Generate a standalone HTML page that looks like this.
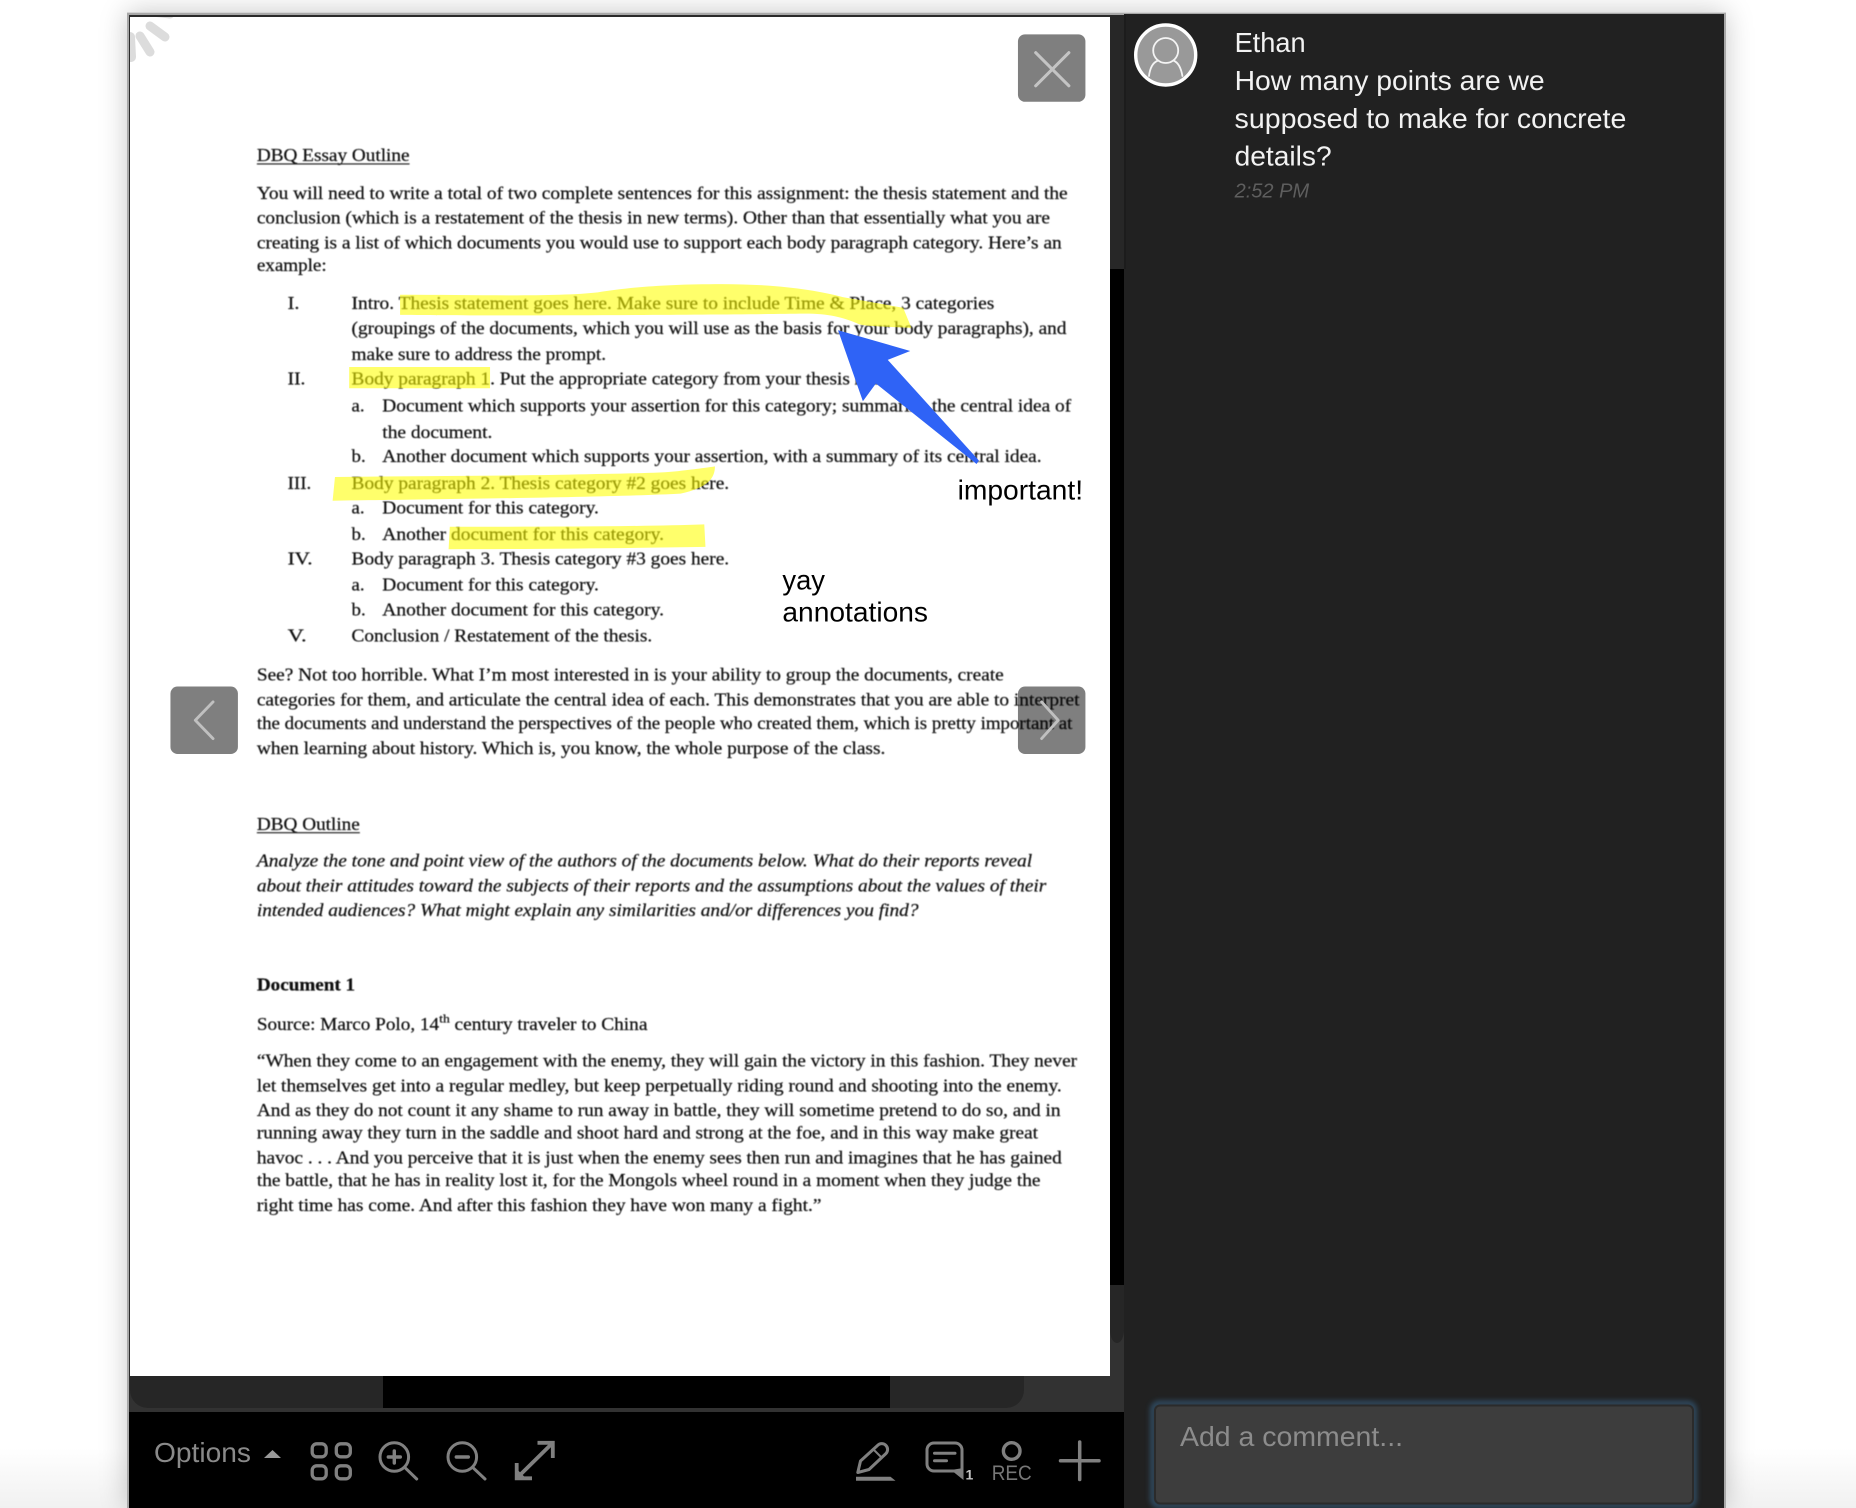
<!DOCTYPE html>
<html lang="en"><head><meta charset="utf-8"><title>Document viewer</title>
<style>
html,body{margin:0;padding:0;width:1856px;height:1508px;overflow:hidden;background:#fff}
#wrap{position:relative;width:1856px;height:1508px;overflow:hidden;background:#fff}
#fade{position:absolute;left:0;right:0;bottom:0;height:60px;background:linear-gradient(#fff,#f1f1f1)}
#shadow{position:absolute;left:127px;top:12px;width:1599px;height:1496px;box-shadow:0 0 26px rgba(0,0,0,.22)}
svg{position:absolute;left:0;top:0;display:block}
.s{font-family:"Liberation Serif",serif;font-size:15.2px;fill:#0c0c0c;stroke:#0c0c0c;stroke-width:.18px}
</style></head><body>
<div id="wrap">
<div id="fade"></div><div id="shadow"></div>
<svg width="1856" height="1508" viewBox="0 0 1856 1508" xmlns="http://www.w3.org/2000/svg">
<defs>
<filter id="soft" x="-2%" y="-2%" width="104%" height="104%"><feGaussianBlur stdDeviation="0.4"/></filter>
<filter id="glow" x="-5%" y="-20%" width="110%" height="140%"><feGaussianBlur stdDeviation="3"/></filter>
<clipPath id="page"><rect x="130" y="17" width="980" height="1359"/></clipPath>
</defs>
<!-- frame -->
<rect x="127" y="12.5" width="1599" height="1496" fill="#a8a8a8"/>
<rect x="129" y="15" width="995" height="1493" fill="#2a2a2a"/>
<rect x="130" y="17" width="980" height="1359" fill="#fff"/>
<!-- vertical scrollbar -->
<rect x="1110" y="15" width="14" height="1361" fill="#272727"/>
<rect x="1110" y="269" width="16" height="1016" fill="#000"/>
<path d="M1110 1285H1124V1330a7 13 0 0 1-14 0Z" fill="#262626"/>
<path d="M1110 1330a7 13 0 0 0 14 0V1376H1110Z" fill="#323232"/>
<!-- horizontal scrollbar -->
<rect x="130" y="1376" width="994" height="36" fill="#323232"/>
<path d="M130 1376H1024V1390a18 18 0 0 1-18 18H148a18 18 0 0 1-18-18Z" fill="#262626"/>
<rect x="383" y="1376" width="507" height="32" fill="#000"/>
<!-- toolbar -->
<rect x="129" y="1412" width="995" height="96" fill="#000"/>
<!-- right panel -->
<rect x="1124" y="14" width="600" height="1494" fill="#212121"/>
<rect x="1124" y="15" width="2" height="254" fill="#1c1c1c"/>

<!-- spinner -->
<g clip-path="url(#page)" stroke="#dcdcdc" stroke-linecap="round" fill="none">
<path d="M150 26L165 37" stroke-width="9"/><path d="M140 36L150 52" stroke-width="9"/><path d="M152 12L170 14" stroke-width="9"/><path d="M130 37L131 57" stroke-width="10"/>
</g>

<g transform="scale(1.18367)">
<!-- document text -->
<g filter="url(#soft)" clip-path="none">
<text class="s" x="217" y="136" textLength="129" lengthAdjust="spacingAndGlyphs">DBQ Essay Outline</text>
<rect x="217" y="138" width="129" height="1" fill="#222"/>
<text class="s" x="217" y="168" textLength="685" lengthAdjust="spacingAndGlyphs">You will need to write a total of two complete sentences for this assignment: the thesis statement and the</text>
<text class="s" x="217" y="189" textLength="670" lengthAdjust="spacingAndGlyphs">conclusion (which is a restatement of the thesis in new terms). Other than that essentially what you are</text>
<text class="s" x="217" y="210" textLength="680" lengthAdjust="spacingAndGlyphs">creating is a list of which documents you would use to support each body paragraph category. Here’s an</text>
<text class="s" x="217" y="229" textLength="59" lengthAdjust="spacingAndGlyphs">example:</text>

<text class="s" x="243" y="261" textLength="10" lengthAdjust="spacingAndGlyphs">I.</text>
<text class="s" x="297" y="261" textLength="543" lengthAdjust="spacingAndGlyphs">Intro. Thesis statement goes here. Make sure to include Time &amp; Place, 3 categories</text>
<text class="s" x="297" y="282" textLength="604" lengthAdjust="spacingAndGlyphs">(groupings of the documents, which you will use as the basis for your body paragraphs), and</text>
<text class="s" x="297" y="304" textLength="215" lengthAdjust="spacingAndGlyphs">make sure to address the prompt.</text>
<text class="s" x="243" y="325" textLength="15" lengthAdjust="spacingAndGlyphs">II.</text>
<text class="s" x="297" y="325" textLength="421" lengthAdjust="spacingAndGlyphs">Body paragraph 1. Put the appropriate category from your thesis</text>
<text class="s" x="722" y="325" textLength="24" lengthAdjust="spacingAndGlyphs">here.</text>
<text class="s" x="297" y="347.500" textLength="11" lengthAdjust="spacingAndGlyphs">a.</text>
<text class="s" x="323" y="347.500" textLength="582" lengthAdjust="spacingAndGlyphs">Document which supports your assertion for this category; summarize the central idea of</text>
<text class="s" x="323" y="370" textLength="93" lengthAdjust="spacingAndGlyphs">the document.</text>
<text class="s" x="297" y="390.500" textLength="12" lengthAdjust="spacingAndGlyphs">b.</text>
<text class="s" x="323" y="390.500" textLength="557" lengthAdjust="spacingAndGlyphs">Another document which supports your assertion, with a summary of its central idea.</text>
<text class="s" x="243" y="413" textLength="20" lengthAdjust="spacingAndGlyphs">III.</text>
<text class="s" x="297" y="413" textLength="319" lengthAdjust="spacingAndGlyphs">Body paragraph 2. Thesis category #2 goes here.</text>
<text class="s" x="297" y="434" textLength="11" lengthAdjust="spacingAndGlyphs">a.</text>
<text class="s" x="323" y="434" textLength="183" lengthAdjust="spacingAndGlyphs">Document for this category.</text>
<text class="s" x="297" y="456" textLength="12" lengthAdjust="spacingAndGlyphs">b.</text>
<text class="s" x="323" y="456" textLength="238" lengthAdjust="spacingAndGlyphs">Another document for this category.</text>
<text class="s" x="243" y="477" textLength="21" lengthAdjust="spacingAndGlyphs">IV.</text>
<text class="s" x="297" y="477" textLength="319" lengthAdjust="spacingAndGlyphs">Body paragraph 3. Thesis category #3 goes here.</text>
<text class="s" x="297" y="499" textLength="11" lengthAdjust="spacingAndGlyphs">a.</text>
<text class="s" x="323" y="499" textLength="183" lengthAdjust="spacingAndGlyphs">Document for this category.</text>
<text class="s" x="297" y="520" textLength="12" lengthAdjust="spacingAndGlyphs">b.</text>
<text class="s" x="323" y="520" textLength="238" lengthAdjust="spacingAndGlyphs">Another document for this category.</text>
<text class="s" x="243" y="542" textLength="16" lengthAdjust="spacingAndGlyphs">V.</text>
<text class="s" x="297" y="542" textLength="254" lengthAdjust="spacingAndGlyphs">Conclusion / Restatement of the thesis.</text>

<text class="s" x="217" y="575" textLength="631" lengthAdjust="spacingAndGlyphs">See? Not too horrible. What I’m most interested in is your ability to group the documents, create</text>
<text class="s" x="217" y="596" textLength="695" lengthAdjust="spacingAndGlyphs">categories for them, and articulate the central idea of each. This demonstrates that you are able to interpret</text>
<text class="s" x="217" y="616" textLength="689" lengthAdjust="spacingAndGlyphs">the documents and understand the perspectives of the people who created them, which is pretty important at</text>
<text class="s" x="217" y="637" textLength="531" lengthAdjust="spacingAndGlyphs">when learning about history. Which is, you know, the whole purpose of the class.</text>

<text class="s" x="217" y="701" textLength="87" lengthAdjust="spacingAndGlyphs">DBQ Outline</text>
<rect x="217" y="703" width="87" height="1" fill="#222"/>
<text class="s" font-style="italic" x="217" y="732" textLength="655" lengthAdjust="spacingAndGlyphs">Analyze the tone and point view of the authors of the documents below. What do their reports reveal</text>
<text class="s" font-style="italic" x="217" y="753" textLength="667" lengthAdjust="spacingAndGlyphs">about their attitudes toward the subjects of their reports and the assumptions about the values of their</text>
<text class="s" font-style="italic" x="217" y="774" textLength="559" lengthAdjust="spacingAndGlyphs">intended audiences? What might explain any similarities and/or differences you find?</text>

<text class="s" font-weight="bold" x="217" y="837" textLength="83" lengthAdjust="spacingAndGlyphs">Document 1</text>
<text class="s" x="217" y="870" textLength="154" lengthAdjust="spacingAndGlyphs">Source: Marco Polo, 14</text>
<text class="s" style="font-size:9.5px" x="371" y="864" textLength="9" lengthAdjust="spacingAndGlyphs">th</text>
<text class="s" x="384" y="870" textLength="163" lengthAdjust="spacingAndGlyphs">century traveler to China</text>
<text class="s" x="217" y="901" textLength="693" lengthAdjust="spacingAndGlyphs">“When they come to an engagement with the enemy, they will gain the victory in this fashion. They never</text>
<text class="s" x="217" y="922" textLength="680" lengthAdjust="spacingAndGlyphs">let themselves get into a regular medley, but keep perpetually riding round and shooting into the enemy.</text>
<text class="s" x="217" y="943" textLength="679" lengthAdjust="spacingAndGlyphs">And as they do not count it any shame to run away in battle, they will sometime pretend to do so, and in</text>
<text class="s" x="217" y="962" textLength="660" lengthAdjust="spacingAndGlyphs">running away they turn in the saddle and shoot hard and strong at the foe, and in this way make great</text>
<text class="s" x="217" y="983" textLength="680" lengthAdjust="spacingAndGlyphs">havoc . . . And you perceive that it is just when the enemy sees then run and imagines that he has gained</text>
<text class="s" x="217" y="1002" textLength="662" lengthAdjust="spacingAndGlyphs">the battle, that he has in reality lost it, for the Mongols wheel round in a moment when they judge the</text>
<text class="s" x="217" y="1023" textLength="477" lengthAdjust="spacingAndGlyphs">right time has come. And after this fashion they have won many a fight.”</text>
</g>

<!-- highlights -->
<g fill="#ffff00" fill-opacity=".58">
<path d="M338 249C400 249 470 251 505 247C530 243 560 240 610 240C655 240 690 245 712 251C735 255 752 258 763 260L770 277C755 276 735 276 726 274C712 268 700 265 680 265C600 266 420 267 338 266Z"/>
<path d="M295 310H414V328H295Z"/>
<path d="M283 403C350 402 430 402 481 401C520 400 555 400 573 398C590 396 598 395 604 394C604 404 598 412 575 417C520 420 360 422 281 423Z"/>
<path d="M380 445C450 445 540 445 595 443L596 462C530 463 450 464 379 464Z"/>
</g>

<!-- arrow -->
<path d="M708 279L769 296.500L750 304L827 389L825 392L740 324L729 339Z" fill="#2f63f6"/>

<!-- annotations -->
<g font-family="Liberation Sans, sans-serif" fill="#000" font-size="23.500">
<text x="809" y="422" textLength="106" lengthAdjust="spacingAndGlyphs">important!</text>
<text x="661" y="498" textLength="36" lengthAdjust="spacingAndGlyphs">yay</text>
<text x="661" y="525" textLength="123" lengthAdjust="spacingAndGlyphs">annotations</text>
</g>

<!-- overlay buttons -->
<rect x="860" y="29" width="57" height="57" rx="6" fill="#000" fill-opacity=".5"/>
<path d="M875 44.500L903 72.500M903 44.500L875 72.500" stroke="#c4c4c4" stroke-width="2.600" stroke-linecap="round" fill="none"/>
<rect x="144" y="580" width="57" height="57" rx="6" fill="#000" fill-opacity=".5"/>
<path d="M180 593L165 608.500L180 624" stroke="#c0c0c0" stroke-width="2.400" stroke-linecap="round" stroke-linejoin="round" fill="none"/>
<rect x="860" y="580" width="57" height="57" rx="6" fill="#000" fill-opacity=".5"/>
<path d="M880 593L894 608.500L880 624" stroke="#c0c0c0" stroke-width="2.400" stroke-linecap="round" stroke-linejoin="round" fill="none"/>

<!-- comments -->
<g font-family="Liberation Sans, sans-serif" fill="#f2f2f2" font-size="23.500">
<text x="1043" y="44" textLength="60" lengthAdjust="spacingAndGlyphs">Ethan</text>
<text x="1043" y="76" textLength="262" lengthAdjust="spacingAndGlyphs">How many points are we</text>
<text x="1043" y="108" textLength="331" lengthAdjust="spacingAndGlyphs">supposed to make for concrete</text>
<text x="1043" y="140" textLength="82" lengthAdjust="spacingAndGlyphs">details?</text>
<text x="1043" y="167" textLength="63" lengthAdjust="spacingAndGlyphs" font-size="17" font-style="italic" fill="#5e5e5e">2:52 PM</text>
</g>
</g>

<!-- avatar -->
<circle cx="1165.700" cy="55" r="30" fill="#999" stroke="#fff" stroke-width="3.400"/>
<circle cx="1165.700" cy="50.500" r="12.500" fill="none" stroke="#f4f4f4" stroke-width="1.800"/>
<path d="M1149 76C1150 67.500 1153 62.500 1158 60.500M1182.400 76C1181 67.500 1178 62.500 1173.500 60.500" fill="none" stroke="#f4f4f4" stroke-width="1.800" stroke-linecap="round"/>

<!-- comment box -->
<rect x="1153" y="1403.500" width="541" height="102" rx="6" fill="none" stroke="#3f78a6" stroke-width="4" filter="url(#glow)" opacity=".7"/>
<rect x="1155" y="1405.500" width="538" height="98" rx="5" fill="#3d3d3d" stroke="#2b2b2b" stroke-width="2"/>
<text x="1180" y="1446" font-family="Liberation Sans, sans-serif" font-size="27.500" fill="#8c8c8c" textLength="223" lengthAdjust="spacingAndGlyphs">Add a comment...</text>

<!-- toolbar left -->
<text x="154" y="1462" font-family="Liberation Sans, sans-serif" font-size="27.500" fill="#8a8a8a" textLength="97" lengthAdjust="spacingAndGlyphs">Options</text>
<path d="M264 1458L272.500 1450L281 1458Z" fill="#999"/>
<g fill="none" stroke="#808080" stroke-width="3.300" stroke-linecap="round" stroke-linejoin="round">
<rect x="312.200" y="1443.800" width="14" height="13" rx="4.500"/>
<rect x="336.300" y="1443.800" width="14" height="13" rx="4.500"/>
<rect x="312.200" y="1465.800" width="14" height="13" rx="4.500"/>
<rect x="336.300" y="1465.800" width="14" height="13" rx="4.500"/>
<circle cx="394.300" cy="1457" r="14.300" stroke-width="3"/>
<path d="M388.300 1457H400.300M394.300 1451V1463" stroke-width="3.400"/>
<path d="M405 1467.700L416.700 1479" stroke-width="3"/>
<circle cx="462.300" cy="1457" r="14.300" stroke-width="3"/>
<path d="M456.300 1457H468.300" stroke-width="3.400"/>
<path d="M473 1467.700L485 1479" stroke-width="3"/>
<path d="M521 1474L550 1445.500" stroke-width="3.800"/>
<path d="M537.500 1442.800H552.800V1458" stroke-width="3.800" stroke-linejoin="miter" stroke-linecap="butt"/>
<path d="M516.700 1463V1478.300H532" stroke-width="3.800" stroke-linejoin="miter" stroke-linecap="butt"/>
<path d="M517 1478V1470L525 1478Z" fill="#808080" stroke-width="1"/>
</g>

<!-- toolbar right -->
<g fill="none" stroke="#808080" stroke-width="3" stroke-linejoin="round" stroke-linecap="round">
<path d="M857.800 1472.500L860.500 1461L877.500 1445.500A5.800 5.800 0 0 1 886 1453.500L869 1469.500Z"/>
<path d="M873.500 1449.500L881.500 1457.500" stroke-width="2"/>
<path d="M934 1443H955A7 7 0 0 1 962 1450V1471H934A7 7 0 0 1 927 1464V1450A7 7 0 0 1 934 1443Z"/>
<path d="M934.500 1453.300H955M934.500 1460.700H946.500"/>
<circle cx="1011.700" cy="1451" r="8.300" stroke-width="3.400"/>
<path d="M1060.500 1460.700H1099M1079.700 1442V1479.500" stroke-width="3.500"/>
</g>
<path d="M856 1476.800H890.500L895.500 1480.800H856Z" fill="#808080"/>
<path d="M951 1470L963.500 1468V1480Z" fill="#808080"/>
<text x="965.500" y="1479.500" font-family="Liberation Sans, sans-serif" font-size="14" font-weight="bold" fill="#c4c4c4">1</text>
<text x="991.700" y="1480" font-family="Liberation Sans, sans-serif" font-size="21" fill="#777" textLength="40" lengthAdjust="spacingAndGlyphs">REC</text>
</svg>
</div>
</body></html>
